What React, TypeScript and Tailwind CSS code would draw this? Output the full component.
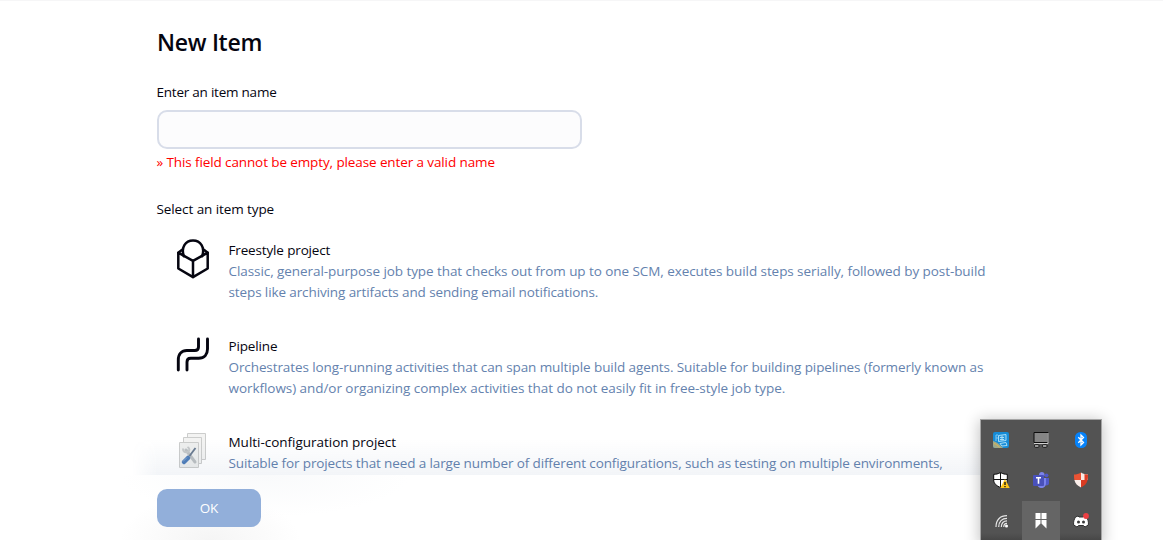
import type { ReactNode } from "react";

function FreestyleIcon() {
  return (
    <svg width="34" height="42" viewBox="0 0 34 42" fill="none" stroke="#050510" strokeWidth="2.5" strokeLinejoin="round" strokeLinecap="round">
      <path d="M17 22.800 2.300 14.700V30.500L17 39.200l14.700-8.700V14.700L17 22.800V39" />
      <path d="M7.800 18.200C4.800 9.500 9.300 2.600 17 2.600S29.200 9.500 26.200 18.200" />
      <path d="M2.300 14.700 5.800 12M31.700 14.700 28.200 12" />
    </svg>
  );
}

function PipelineIcon() {
  return (
    <svg width="34" height="36" viewBox="0 0 34 36" fill="none" stroke="#050510" strokeWidth="2.9" strokeLinecap="round">
      <path d="M2.300 33V23c0-6 3.500-9.500 8.500-9.500h8c2.500 0 3.700-1.200 3.700-3.500V2" />
      <path d="M11 33V25c0-2.500 1.200-3.800 3.700-3.800h8c5.500 0 8.800-3.700 8.800-9.200V2" />
    </svg>
  );
}

function MultiIcon() {
  return (
    <svg width="28" height="36" viewBox="0 0 28 36" fill="none">
      <g fill="#f3f3f2" stroke="#cccdcc" strokeWidth="1">
        <path d="M8.500.500h18v26h-18z" />
        <path d="M4.500 4.500h18v26h-18z" />
        <path d="M.500 9.500h19v25H.500z" fill="#eeefee" />
      </g>
      <path d="m7 17 9 12" stroke="#bcc0c2" strokeWidth="3" strokeLinecap="round" />
      <path d="M4 15.500c0 3 2 4.500 4.500 3.500s2.500-3.500 0-5" stroke="#c5c8c9" strokeWidth="2" />
      <path d="m16.500 15-6 8" stroke="#6b7c91" strokeWidth="1.800" />
      <path d="m9 25-4 4" stroke="#4e7db9" strokeWidth="4.500" strokeLinecap="round" />
      <path d="m8 24.500-4 4" stroke="#85a9d5" strokeWidth="1" />
    </svg>
  );
}

function Item({ icon, title, lines }: { icon: ReactNode; title: ReactNode; lines: ReactNode }) {
  return (
    <li className="flex h-24">
      <div className="w-[71.5px] shrink-0 pl-[19px]">{icon}</div>
      <div className="whitespace-nowrap text-[13.5px] leading-[21px]">
        <div className="text-[#050510]">{title}</div>
        <div className="text-[#6482ae]">{lines}</div>
      </div>
    </li>
  );
}

const BlueMonitor = () => (
  <svg width="16" height="16" viewBox="0 0 16 16">
    <rect width="16" height="16" rx="2" fill="#168bd6" />
    <path d="M0 9c4 1 7 4 10 7H2a2 2 0 0 1-2-2z" fill="#9fa98a" />
    <path d="M1 11.500c2 .500 4 2 5.500 4" stroke="#e0b64e" fill="none" />
    <path d="M5.500 3.500 13 2.500v6L5.500 9.500z" fill="#2796dc" stroke="#a4dcf8" />
    <path d="M7 5.500h4M7 7.500h4M9 3.500v5M7 11.500l6-1 1 3-5 .500z" stroke="#a9ddf6" fill="none" />
    <path d="M3 9V3h2M3 6h2" stroke="#7cc6f2" fill="none" />
  </svg>
);

const Computer = () => (
  <svg width="16" height="16" viewBox="0 0 16 16">
    <path d="M1 .500h14v10H1z" fill="#858585" stroke="#0c0c0c" />
    <path d="M1 11.500h14V1" fill="none" stroke="#cfcfcf" />
    <rect x="1.500" y="12.700" width="4.500" height="2.600" rx="1" fill="#bbb" stroke="#161616" />
    <rect x="9.500" y="12.700" width="4.500" height="2.600" rx="1" fill="#bbb" stroke="#161616" />
  </svg>
);

const Bluetooth = () => (
  <svg width="16" height="16" viewBox="0 0 16 16">
    <rect x="2" width="12" height="16" rx="5.500" fill="#0683fb" />
    <path d="m5.300 5.300 5.200 5.200L8 13V3l2.500 2.500-5.200 5.200" fill="none" stroke="white" strokeWidth="1.300" />
  </svg>
);

const Defender = () => (
  <svg width="17" height="16" viewBox="0 0 17 16">
    <path d="M7.500.500C5 2 3 2.300.700 2.300V8c0 3.500 3 6 6.800 7.500C11.300 14 14.300 11.500 14.300 8V2.300C12 2.300 10 2 7.500.500z" fill="white" stroke="#080808" />
    <path d="M7.500 1v14M1 7.500h13" stroke="#111" />
    <path d="m12 7 4.700 9H7.300z" fill="#ffc61a" />
    <path d="M12 10v3M12 14v1.200" stroke="#171717" strokeWidth="1.400" />
  </svg>
);

const Teams = () => (
  <svg width="16" height="16" viewBox="0 0 16 16">
    <circle cx="13.500" cy="3.300" r="1.900" fill="#5059c9" />
    <path d="M11 6h5v5.500c0 2-3 2.500-5 1.500z" fill="#5059c9" />
    <circle cx="8.800" cy="2.700" r="2.700" fill="#7b83eb" />
    <path d="M4 6h9v5c0 3-2 5-4.500 5S4 14 4 11z" fill="#7b83eb" />
    <rect y="3" width="11" height="11" rx="1" fill="#4951bb" />
    <path d="M3 5.700h5M5.500 5.700v6" stroke="white" strokeWidth="1.600" />
  </svg>
);

const RedShield = () => (
  <svg width="16" height="16" viewBox="0 0 16 16">
    <path d="M8 .500C5.500 2 3.500 2.500 1 2.500c0 2 0 4 .400 5.500H8z" fill="#ea5334" />
    <path d="M8 .500c2.500 1.500 4.500 2 7 2 0 2 0 4-.400 5.500H8z" fill="#fbe9e4" />
    <path d="M11.500 2c1 .400 2 .500 3.500.500 0 2 0 4-.400 5.500h-3.100z" fill="#df3c24" />
    <path d="M1.400 8H8v7.500C4.300 13.700 2.300 11.500 1.400 8z" fill="#fbeeea" />
    <path d="M8 8h6.600c-.900 3.500-2.900 5.700-6.600 7.500z" fill="#d93b22" />
  </svg>
);

const Wifi = () => (
  <svg width="16" height="16" viewBox="0 0 16 16" fill="none" stroke="#e5e5e5" strokeWidth="1.200" className="ml-0.5">
    <path d="M2 14C2 7 6 2.700 13 2.700M4.700 14C4.700 8.500 8 5.300 13 5.300M7.300 14c0-3.800 2.200-6.200 5.700-6.200M9.800 14c0-2.200 1.200-3.600 3.200-3.600" />
    <circle cx="12.500" cy="13" r="1.500" fill="white" stroke="none" />
  </svg>
);

const Bookmark = () => (
  <svg width="16" height="16" viewBox="0 0 16 16">
    <path d="M2.500 0h5v6h-5zM8.500 0h5v6h-5zM2.500 7h5v3.500l-5 5zM8.500 7h5v8.500l-5-5z" fill="white" />
  </svg>
);

const Discord = () => (
  <svg width="18" height="16" viewBox="0 0 18 16">
    <path d="M6 3 3.500 4C2 6.500 1.200 9 1.700 12l3.300 2 1.500-1.500h5L13 14l3.300-2c.500-3-.300-5.500-1.800-8L12 3l-1 1H7z" fill="white" stroke="#303030" />
    <circle cx="6.500" cy="9" r="1.500" fill="#393939" />
    <circle cx="11.500" cy="9" r="1.500" fill="#393939" />
    <circle cx="14" cy="3" r="2.900" fill="#ed4044" />
  </svg>
);

const trayIcons = [BlueMonitor, Computer, Bluetooth, Defender, Teams, RedShield, Wifi, Bookmark, Discord];

export default function App() {
  return (
    <div className="relative h-[540px] w-full overflow-hidden border-t border-[#f6f6f7] bg-white font-['Open_Sans','Noto_Sans',sans-serif] text-[#050510]">
      <main className="pl-[157px]">
        <h1 className="pt-[23px] text-[23px] leading-9 font-semibold tracking-[-0.28px]">New Item</h1>
        <label className="mt-[22px] -ml-[0.5px] block text-[13.5px] leading-[21px] tracking-[-0.23px]" htmlFor="name">Enter an item name</label>
        <input id="name" className="mt-[7px] block h-[39px] w-[425px] rounded-[10px] border-2 border-[#d8dde9] bg-[#fcfcfd]" />
        <p className="mt-[3px] -ml-[0.5px] text-[13.5px] leading-[21px] tracking-[-0.11px] text-[#f00]">» This field cannot be empty, please enter a valid name</p>
        <p className="mt-[26px] -ml-[0.5px] text-[13.5px] leading-[21px] tracking-[-0.09px]">Select an item type</p>
        <ul className="mt-5">
          <Item
            icon={<div className="-mt-[2px]"><FreestyleIcon /></div>}
            title={<div className="tracking-[-0.15px]">Freestyle project</div>}
            lines={
              <>
                <div className="tracking-[-0.07px]">Classic, general-purpose job type that checks out from up to one SCM, executes build steps serially, followed by post-build</div>
                <div className="tracking-[-0.11px]">steps like archiving artifacts and sending email notifications.</div>
              </>
            }
          />
          <Item
            icon={<div className="pt-px"><PipelineIcon /></div>}
            title={<div className="tracking-[-0.15px]">Pipeline</div>}
            lines={
              <>
                <div className="tracking-[-0.095px]">Orchestrates long-running activities that can span multiple build agents. Suitable for building pipelines (formerly known as</div>
                <div className="tracking-[-0.052px]">workflows) and/or organizing complex activities that do not easily fit in free-style job type.</div>
              </>
            }
          />
          <Item
            icon={<div className="pt-px pl-[3px]"><MultiIcon /></div>}
            title={<div className="tracking-[-0.02px]">Multi-configuration project</div>}
            lines={<div className="tracking-[-0.12px]">Suitable for projects that need a large number of different configurations, such as testing on multiple environments,</div>}
          />
        </ul>
      </main>
      <div className="pointer-events-none absolute bottom-[65px] left-[132px] h-9 w-[900px] bg-gradient-to-b from-transparent to-[#506f9b]/7 [mask-image:linear-gradient(to_right,transparent,black_25px)]" />
      <footer className="absolute bottom-0 left-0 h-[65px] w-full bg-[radial-gradient(ellipse_145px_42px_at_265px_0px,#f9fafb,transparent),radial-gradient(ellipse_90px_45px_at_210px_65px,#f5f5f5,transparent)] bg-white pt-3.5 pl-[157px]">
        <button className="h-[38px] w-[104px] rounded-[10px] bg-[#92afda] pt-px text-[13.5px] tracking-[-0.2px] text-white">OK</button>
      </footer>
      <aside className="absolute top-[418px] left-[980px] grid h-[125px] w-[122px] grid-cols-3 grid-rows-[40px_40px_41px] border border-[#a5a5a5] bg-[linear-gradient(to_bottom,#535353_113px,#444_122px)] shadow-[0_2px_14px_1px_rgba(0,0,0,0.24)]">
        {trayIcons.map((Icon, i) => (
          <div key={i} className={i === 7 ? "m-px flex items-center justify-center bg-[#656565]" : "flex items-center justify-center"}>
            <Icon />
          </div>
        ))}
      </aside>
    </div>
  );
}
